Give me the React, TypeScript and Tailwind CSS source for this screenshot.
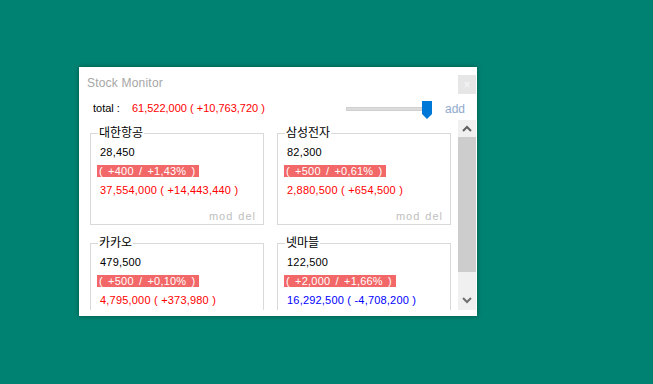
import React from "react";

type Stock = {
  name: string;
  price: string;
  change: string;
  value: string;
  gain: string;
  down?: boolean;
};

const stocks: Stock[] = [
  { name: "대한항공", price: "28,450", change: "( +400 / +1,43% )", value: "37,554,000", gain: "+14,443,440" },
  { name: "삼성전자", price: "82,300", change: "( +500 / +0,61% )", value: "2,880,500", gain: "+654,500" },
  { name: "카카오", price: "479,500", change: "( +500 / +0,10% )", value: "4,795,000", gain: "+373,980" },
  { name: "넷마블", price: "122,500", change: "( +2,000 / +1,66% )", value: "16,292,500", gain: "-4,708,200", down: true },
];

const font = { fontFamily: '"Liberation Sans", "Noto Sans CJK KR", Arial, sans-serif' };

function StockCard({ stock }: { stock: Stock }) {
  const color = stock.down ? "text-[#0000ff]" : "text-[#ff0000]";
  return (
    <div className="w-[174px] h-[92px] border border-[#d9d9d9] flex flex-col shrink-0">
      <div
        className="-mt-[10px] ml-[7px] px-[1px] bg-white w-fit text-[12px] leading-[16px] text-black"
        style={{ fontFamily: '"Noto Sans CJK KR", sans-serif' }}
      >
        {stock.name}
      </div>
      <div className="mt-[4px] pl-[9px] text-[11px] leading-[16px] text-black tracking-[0.2px]">{stock.price}</div>
      <div className="mt-[5px] ml-[6px] w-fit bg-[#f26767] text-white text-[11px] leading-[12px] h-[12px] pl-[2px] pr-[4px] whitespace-pre [word-spacing:2px] tracking-[0.2px]">
        {stock.change}
      </div>
      <div className={`mt-[5px] pl-[9px] text-[11px] leading-[16px] whitespace-pre tracking-[0.2px] ${color}`}>
        {stock.value} ( {stock.gain} )
      </div>
      <div className="mt-[10px] pr-[7px] flex justify-end gap-[5px] text-[11px] leading-[16px] text-[#c0c0c0] tracking-[1px]">
        <span>mod</span>
        <span>del</span>
      </div>
    </div>
  );
}

export default function App() {
  return (
    <div className="w-[653px] h-[384px] bg-[#008272] pt-[67px] pl-[79px] overflow-hidden" style={font}>
      <div className="w-[398px] h-[249px] bg-white flex flex-col shadow-[0_0_5px_rgba(0,0,0,0.35)]">
        {/* header */}
        <div className="h-[30px] flex justify-between">
          <div className="pt-[8px] pl-[8px] text-[12px] leading-[16px] text-[#a6a6a6] tracking-[0.2px]">Stock Monitor</div>
          <div className="mt-[8px] mr-[1px] w-[18px] h-[19px] bg-[#e6e6e6] flex items-center justify-center text-[#f8f8f8] text-[12px] leading-none">
            ×
          </div>
        </div>

        {/* total row */}
        <div className="h-[23px] flex items-center">
          <span className="pl-[14px] text-[11px] text-black">total :</span>
          <span className="ml-[12px] text-[11px] text-[#ff0000] whitespace-pre">61,522,000 ( +10,763,720 )</span>
          <div className="ml-auto flex items-center">
            <div className="relative w-[86px] h-[18px] flex items-center">
              <div className="w-[81px] h-[4px] bg-[#dcdcdc] border border-[#cfcfcf]" />
              <svg className="absolute left-[76px] top-[1px]" width="10" height="18" viewBox="0 0 10 18">
                <path d="M0 0H10V13L5 18L0 13Z" fill="#0078d7" />
              </svg>
            </div>
            <span className="ml-[13px] mr-[12px] text-[12px] text-[#8fa9cc]">add</span>
          </div>
        </div>

        {/* list */}
        <div className="h-[190px] flex">
          <div className="flex-1 overflow-hidden pt-[13px] pl-[11px]">
            <div className="grid grid-cols-[174px_174px] gap-x-[13px] gap-y-[18px]">
              {stocks.map((s) => (
                <StockCard key={s.name} stock={s} />
              ))}
            </div>
          </div>
          <div className="w-[18px] mr-[1px] bg-[#f0f0f0] flex flex-col">
            <div className="h-[17px] flex items-center justify-center">
              <svg width="10" height="8" viewBox="0 0 10 8">
                <path d="M1 6L5 2L9 6" stroke="#606060" strokeWidth="2" fill="none" />
              </svg>
            </div>
            <div className="h-[135px] bg-[#cdcdcd]" />
            <div className="flex-1 flex items-end justify-center pb-[6px]">
              <svg width="10" height="8" viewBox="0 0 10 8">
                <path d="M1 2L5 6L9 2" stroke="#707070" strokeWidth="2" fill="none" />
              </svg>
            </div>
          </div>
        </div>
      </div>
    </div>
  );
}
